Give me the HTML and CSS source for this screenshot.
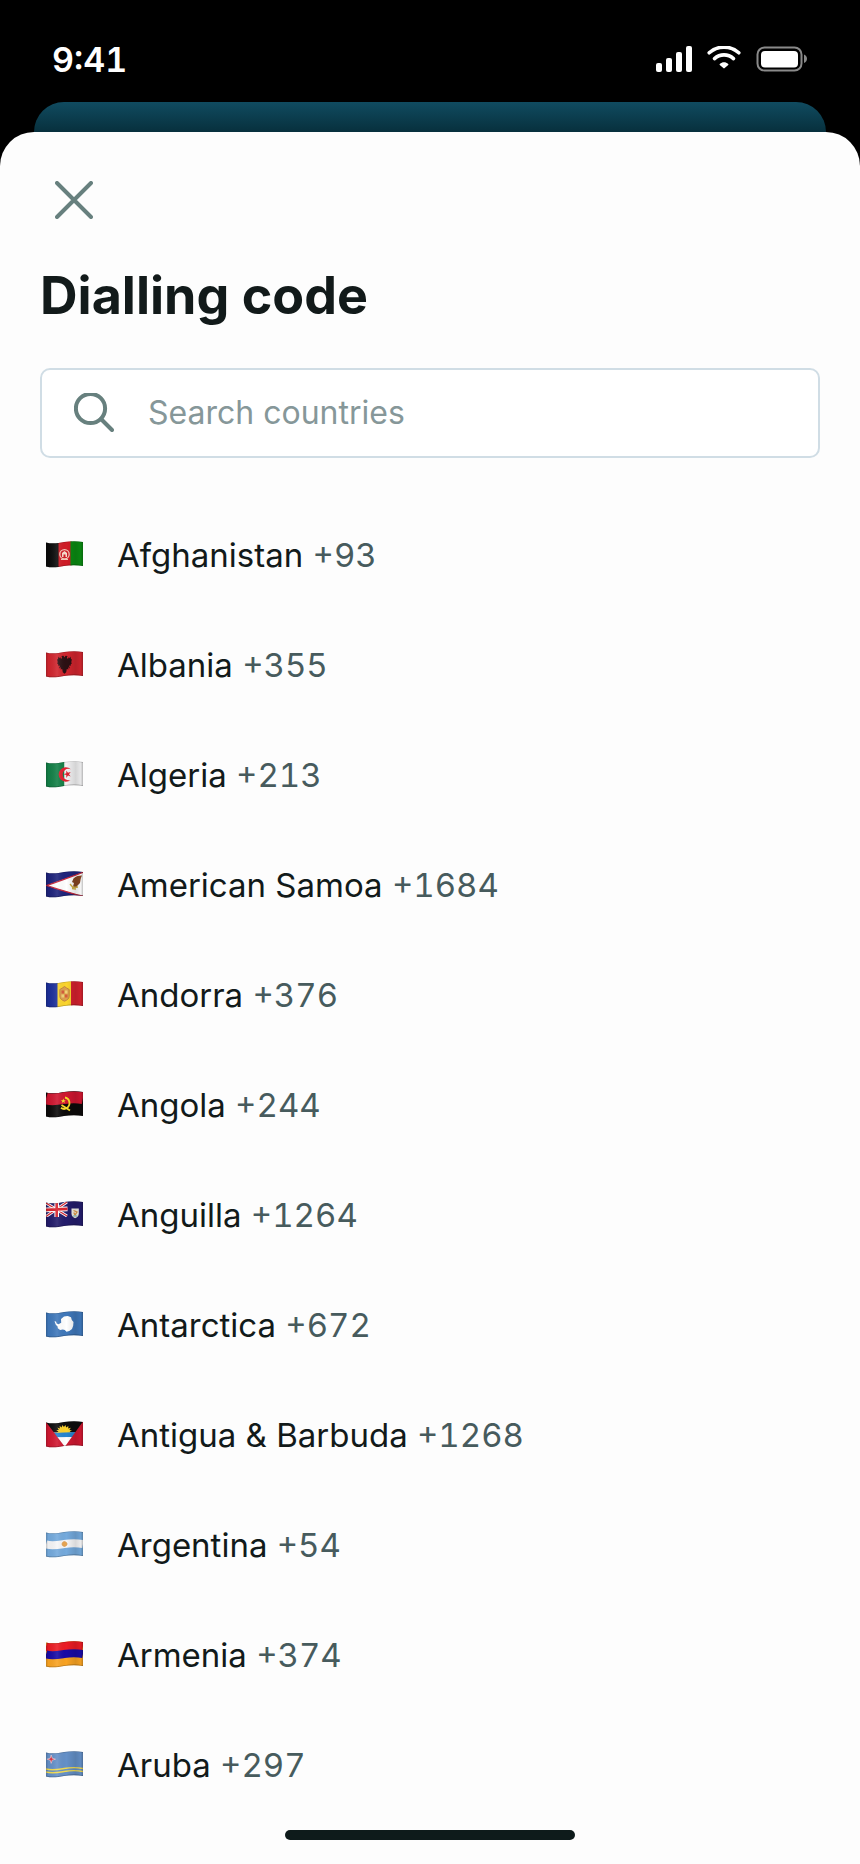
FILE: index.html
```html
<!DOCTYPE html>
<html lang="en">
<head>
<meta charset="utf-8">
<meta name="viewport" content="width=device-width, initial-scale=1">
<title>Dialling code</title>
<link rel="stylesheet" href="styles.css">
</head>
<body>
<svg class="defs" aria-hidden="true">
  <defs>
    <clipPath id="cloth"><path d="M0 1.4c6 1.8 12 .6 18-.4s13-1.2 19 0v24c-6-1.2-13-1-19 0s-12 2.2-18 .4z"/></clipPath>
    <path id="wave" fill="none" d="M0 1.4c6 1.8 12 .6 18-.4s13-1.2 19 0"/>
    <linearGradient id="fold">
      <stop offset="0" stop-color="#000" stop-opacity=".22"/>
      <stop offset=".06" stop-color="#000" stop-opacity=".03"/>
      <stop offset=".3" stop-color="#fff" stop-opacity=".1"/>
      <stop offset=".55" stop-color="#000" stop-opacity="0"/>
      <stop offset=".8" stop-color="#000" stop-opacity=".12"/>
      <stop offset=".94" stop-color="#000" stop-opacity=".04"/>
      <stop offset="1" stop-color="#000" stop-opacity=".25"/>
    </linearGradient>
    <g id="shade">
      <path fill="url(#fold)" d="M0 0h37v27H0z"/>
      <use href="#wave" stroke="#000" stroke-opacity=".18" stroke-width="1.4"/>
      <use href="#wave" y="24" stroke="#000" stroke-opacity=".22" stroke-width="1.6"/>
    </g>
  </defs>
</svg>

<header class="status">
  <time class="status-time">9:41</time>
  <div class="status-icons">
    <svg width="36" height="26" viewBox="0 0 36 26" fill="#fff" role="img" aria-label="Signal"><rect y="17" width="6" height="9" rx="2"/><rect x="10" y="12" width="6" height="14" rx="2"/><rect x="20" y="6" width="6" height="20" rx="2"/><rect x="30" width="6" height="26" rx="2"/></svg>
    <svg width="34" height="26" viewBox="0 0 34 26" role="img" aria-label="Wi-Fi"><g fill="none" stroke="#fff" stroke-width="3.6" stroke-linecap="round"><path d="M2.200 6.800C10.200-.7 23.800-.7 31.800 6.800"/><path d="M7.500 12.600c5.600-5 13.400-5 19 0"/></g><path fill="#fff" d="M12.800 17.900c2.400-2.200 6-2.200 8.400 0 .4.400.4.700 0 1.100l-3.500 3.100c-.5.500-.9.500-1.400 0l-3.500-3.100c-.4-.4-.4-.7 0-1.100z"/></svg>
    <svg width="52" height="26" viewBox="0 0 52 26" role="img" aria-label="Battery"><rect x="1.500" y="1.500" width="44" height="23" rx="7" fill="none" stroke="#8a8a8a" stroke-width="2"/><rect x="5" y="5" width="37" height="16.500" rx="4" fill="#fff"/><path d="M48 8.500c4 1.200 4 7.300 0 8.500z" fill="#8a8a8a"/></svg>
  </div>
</header>
<div class="backdrop"></div>

<main class="sheet">
  <button class="close" type="button" aria-label="Close">
    <svg width="38" height="38" viewBox="0 0 38 38" fill="none" stroke="currentColor" stroke-width="4" stroke-linecap="round"><path d="M2 2l34 34M36 2L2 36"/></svg>
  </button>
  <h1 class="title">Dialling code</h1>
  <label class="search">
    <svg width="40" height="40" viewBox="0 0 40 40" fill="none" stroke="currentColor" stroke-width="4" stroke-linecap="round"><circle cx="16.500" cy="15.500" r="14.600"/><path d="M27 26L38 37"/></svg>
    <input class="search-input" type="search" placeholder="Search countries" aria-label="Search countries">
  </label>

  <ul class="countries">
    <li><button class="country" type="button">
      <svg class="flag" viewBox="0 0 37 27"><g clip-path="url(#cloth)"><path fill="#0b0b0b" d="M0 0h13v27H0z"/><path fill="#d01c26" d="M12.500 0h13v27h-13z"/><path fill="#0a8a12" d="M24.500 0H37v27H24.500z"/><circle cx="18.500" cy="13.300" r="4.700" fill="none" stroke="#f3c9b8" stroke-width="1.300"/><path fill="#f6dccc" d="M16 16v-4l2.500-2 2.500 2v4h-1.500v-2.500h-2V16z"/><path stroke="#f3c9b8" d="M15 18.500h7"/><use href="#shade"/></g></svg>
      <span>Afghanistan <span class="code">+93</span></span></button></li>
    <li><button class="country" type="button">
      <svg class="flag" viewBox="0 0 37 27"><g clip-path="url(#cloth)"><path fill="#d0252e" d="M0 0h37v27H0z"/><path fill="#2b1013" d="M18.500 6.500l1-1.700 2 .2-.6 1.700 1 1.300 1-2 .8 1.300 1-1.700.3 3 1-.6-.8 3.600.8.300-1.600 2 .5 1.200-2-.5 1.100 3-1.900-1.300.3 2.300-1.600-.6-.6 3.200-1.700 1.600-1.700-1.600-.6-3.200-1.600.6.300-2.300-1.900 1.300 1.100-3-2 .5.500-1.200-1.600-2 .8-.3-.8-3.600 1 .6.300-3 1 1.700.8-1.300 1 2 1-1.300-.6-1.700 2-.2z"/><use href="#shade"/></g></svg>
      <span>Albania <span class="code">+355</span></span></button></li>
    <li><button class="country" type="button">
      <svg class="flag" viewBox="0 0 37 27"><g clip-path="url(#cloth)"><path fill="#138047" d="M0 0h18.500v27H0z"/><path fill="#f1f1f2" d="M18.500 0H37v27H18.500z"/><path fill="#e0202f" d="M24.800 8.300a7.200 7.200 0 1 0 0 10.400 5.700 5.700 0 1 1 0-10.400z"/><path fill="#e0202f" d="M17.500 13.200l2.800-.9v-2.800l1.700 2.300 2.700-.9-1.700 2.300 1.700 2.300-2.700-.9-1.700 2.300v-2.800z"/><use href="#shade"/></g></svg>
      <span>Algeria <span class="code">+213</span></span></button></li>
    <li><button class="country" type="button">
      <svg class="flag" viewBox="0 0 37 27"><g clip-path="url(#cloth)"><path fill="#1e237c" d="M0 0h37v27H0z"/><path fill="#fff" stroke="#c7283c" stroke-width="1.300" d="M.5 14.500C12 11 24 6 38 1v24.500C24 22 12 18 .5 14.500z"/><path fill="#854522" d="M27.500 7.500c3-2.800 6.500-3.200 8.500-3-1.500 2.500-1.500 5-2 7.500l-2.500 2.500-1 2-3.500-1 1-3.500-2-1z"/><path fill="none" stroke="#cfae42" stroke-width="1.400" d="M24 13l3 3.500 5-.5M26 17.500l4 .5"/><use href="#shade"/></g></svg>
      <span>American Samoa <span class="code">+1684</span></span></button></li>
    <li><button class="country" type="button">
      <svg class="flag" viewBox="0 0 37 27"><g clip-path="url(#cloth)"><path fill="#1c2f9a" d="M0 0h12v27H0z"/><path fill="#fbd52c" d="M11.500 0h14v27h-14z"/><path fill="#d4212e" d="M25 0h12v27H25z"/><path fill="#dda04e" stroke="#b9793b" stroke-width=".8" d="M13.800 8.500l2.500-1.500 2.200-1.500L20.700 7l2.500 1.500v6.700c0 2.500-2.200 4-4.700 5-2.500-1-4.700-2.500-4.700-5z"/><path fill="#d65a3b" d="M15.500 9.500h2.500v3h-2.500zM19 13.500h2.500v3H19z"/><path fill="#f1d177" d="M19 9.500h2.500v3H19zM15.500 13.500H18v3h-2.500z"/><use href="#shade"/></g></svg>
      <span>Andorra <span class="code">+376</span></span></button></li>
    <li><button class="country" type="button">
      <svg class="flag" viewBox="0 0 37 27"><g clip-path="url(#cloth)"><path fill="#0c0a0a" d="M0 0h37v27H0z"/><use href="#wave" y="6" stroke="#cf1630" stroke-width="12"/><path fill="none" stroke="#f5d92b" stroke-width="1.800" d="M19 6.500c5 1 6 7.500 2 10.500-2 1.300-4.500 1-6-.2M15.500 14l8.500 5.500"/><path fill="#f5d92b" d="M17.300 7.500l.7 1.700h1.800l-1.400 1.100.5 1.800-1.600-1-1.600 1 .5-1.800-1.400-1.100h1.800z"/><use href="#shade"/></g></svg>
      <span>Angola <span class="code">+244</span></span></button></li>
    <li><button class="country" type="button">
      <svg class="flag" viewBox="0 0 37 27"><g clip-path="url(#cloth)"><path fill="#231c6b" d="M0 0h37v27H0z"/><path stroke="#fff" stroke-width="2.800" d="M0 2l21 13M0 15.500L21 1"/><path stroke="#d8232e" stroke-width="1.100" d="M0 2l21 13M0 15.500L21 1"/><path stroke="#fff" stroke-width="4.600" d="M10.700 1v15M0 8.900l21.500-1"/><path stroke="#d8232e" stroke-width="2.600" d="M10.700 1v15M0 8.900l21.500-1"/><path fill="#231c6b" d="M0 16h22V1h6v18H0z"/><path fill="#f4f1e6" d="M25.500 7.500h7.300v5c0 2.500-1.600 3.900-3.700 4.700-2-.8-3.600-2.200-3.600-4.700z"/><path fill="none" stroke="#e19a45" stroke-width="1.300" d="M27.500 9.500l3.500 1.500-2 3-1.200-2.500"/><path stroke="#77b9c4" d="M27 15h4.300"/><use href="#shade"/></g></svg>
      <span>Anguilla <span class="code">+1264</span></span></button></li>
    <li><button class="country" type="button">
      <svg class="flag" viewBox="0 0 37 27"><g clip-path="url(#cloth)"><path fill="#3f78bb" d="M0 0h37v27H0z"/><path fill="#fff" d="M8.500 10.200l1.500.3.700 2 1.800.7 2.700-1.500-.2-3.700 3-2.600 3.800-.5 3.200 1.300.8 2.700 1.700 2-.3 3.800-1.200 3.200-2.700 2-2.800.8-1.700-1.800-2-.3-2.700.3-2.300-1.600-.2-1.800-1.800-1.800z"/><use href="#shade"/></g></svg>
      <span>Antarctica <span class="code">+672</span></span></button></li>
    <li><button class="country" type="button">
      <svg class="flag" viewBox="0 0 37 27"><g clip-path="url(#cloth)"><path fill="#0c0c0d" d="M0 0h37v11.500H0z"/><path fill="#fbd22d" d="M10.500 12l2-1.600-2.300-1 2.600-.6-1.500-2.200 2.600.9-.3-2.700 2 1.700.8-2.600 1.500 2.200L19.500 4l.6 2.400 2.300-1.500-.2 2.700 2.600-.9-1.400 2.200 2.600.5-2.300 1.100 2 1.500z"/><path fill="#2485d0" d="M0 12.300l37-1.500v6H0z"/><path fill="#fff" d="M0 16.500l37-.8V27H0z"/><path fill="#d01831" d="M0 1l18.800 24.700L37 .5V27H0z"/><use href="#shade"/></g></svg>
      <span>Antigua &amp; Barbuda <span class="code">+1268</span></span></button></li>
    <li><button class="country" type="button">
      <svg class="flag" viewBox="0 0 37 27"><g clip-path="url(#cloth)"><path fill="#74aadd" d="M0 0h37v27H0z"/><use href="#wave" y="12" stroke="#f6f6f7" stroke-width="8"/><circle cx="18.500" cy="13" r="2.500" fill="#e7a552" stroke="#d39751" stroke-width=".8" stroke-dasharray="1 .6"/><use href="#shade"/></g></svg>
      <span>Argentina <span class="code">+54</span></span></button></li>
    <li><button class="country" type="button">
      <svg class="flag" viewBox="0 0 37 27"><g clip-path="url(#cloth)"><path fill="#f9a322" d="M0 0h37v27H0z"/><use href="#wave" y="4" stroke="#ec1c24" stroke-width="9"/><use href="#wave" y="12" stroke="#1a0aa6" stroke-width="8"/><use href="#shade"/></g></svg>
      <span>Armenia <span class="code">+374</span></span></button></li>
    <li><button class="country" type="button">
      <svg class="flag" viewBox="0 0 37 27"><g clip-path="url(#cloth)"><path fill="#6490c8" d="M0 0h37v27H0z"/><use href="#wave" y="16.500" stroke="#f4dc4e" stroke-width="1.400"/><use href="#wave" y="19.500" stroke="#f4dc4e" stroke-width="1.400"/><path fill="#dc3444" stroke="#f3dfe6" stroke-width=".6" d="M5.200 4l1 3.200 3.300 1-3.300 1-1 3.200-1-3.200-3.300-1 3.300-1z"/><use href="#shade"/></g></svg>
      <span>Aruba <span class="code">+297</span></span></button></li>
  </ul>
  <div class="home-indicator"></div>
</main>
</body>
</html>
```
FILE: styles.css
```css
* {
  box-sizing: border-box;
}

body {
  margin: 0;
  background: #000;
  color: #121a1a;
  font-family: Inter, Roboto, "Liberation Sans", sans-serif;
}

button,
input {
  font: inherit;
  color: inherit;
}

.defs {
  position: absolute;
  width: 0;
  height: 0;
}

.status {
  display: flex;
  align-items: center;
  justify-content: space-between;
  height: 102px;
  padding: 16px 52px 0;
  color: #fff;
}

.status-time {
  font-size: 34px;
  font-weight: 600;
  font-variant-numeric: tabular-nums;
}

.status-icons {
  display: flex;
  gap: 15px;
}

.backdrop {
  height: 30px;
  margin: 0 34px;
  border-radius: 30px 30px 0 0;
  background: linear-gradient(#104b60, #07303d);
}

.sheet {
  display: flex;
  flex-direction: column;
  padding: 46px 40px 24px;
  border-radius: 34px 34px 0 0;
  background: #fdfdfd;
}

.close {
  display: grid;
  place-items: center;
  width: 44px;
  height: 44px;
  margin: 0 12px;
  padding: 0;
  border: 0;
  background: none;
  color: #67807e;
}

.title {
  margin: 42px 0 40px;
  font-size: 52px;
  font-weight: 700;
  line-height: 64px;
}

.search {
  display: flex;
  align-items: center;
  gap: 34px;
  height: 90px;
  padding: 0 32px;
  border: 2px solid #d0dde5;
  border-radius: 10px;
  background: #fff;
  color: #67807e;
}

.search-input {
  flex: 1;
  min-width: 0;
  padding: 0 0 2px;
  border: 0;
  outline: 0;
  background: none;
  color: #121a1a;
  font-size: 32px;
}

.search-input::placeholder {
  color: #869799;
  opacity: 1;
}

.countries {
  margin: 42px 0 10px;
  padding: 0;
  list-style: none;
}

.country {
  display: flex;
  align-items: center;
  gap: 34px;
  width: 100%;
  height: 110px;
  padding: 0 6px;
  border: 0;
  background: none;
  font-size: 33px;
  text-align: left;
}

.flag {
  flex: none;
  width: 37px;
  height: 27px;
  margin-bottom: 2px;
}

.code {
  color: #475b5d;
  font-variant-numeric: tabular-nums;
}

.home-indicator {
  align-self: center;
  width: 290px;
  height: 10px;
  border-radius: 5px;
  background: #0e1b1b;
}
```
